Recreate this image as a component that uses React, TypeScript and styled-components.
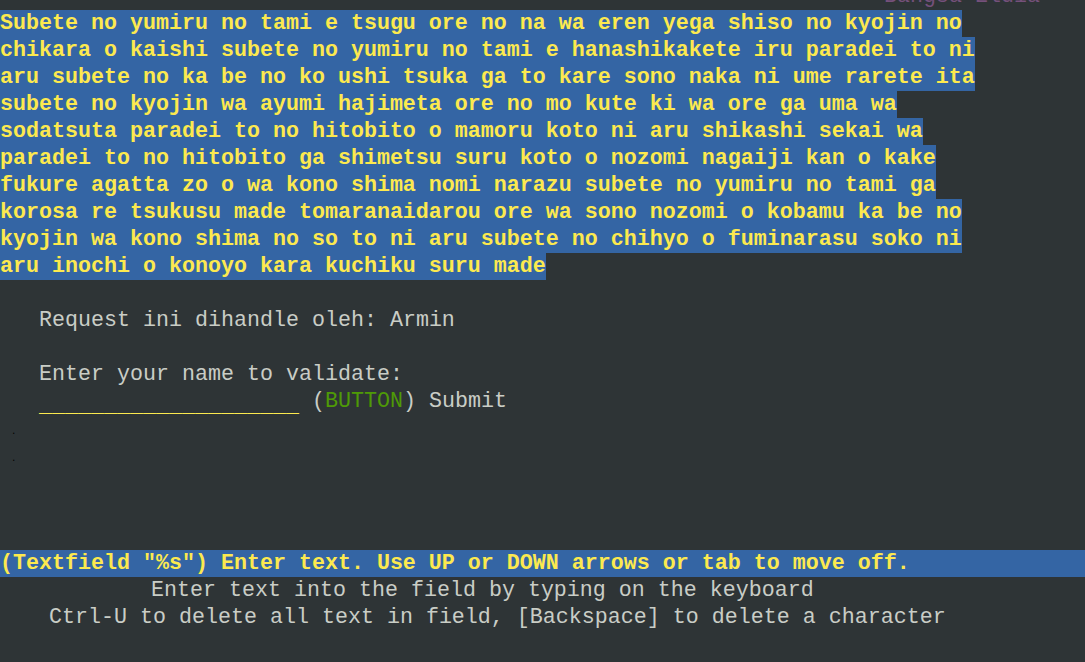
import React from "react";
import styled, { createGlobalStyle } from "styled-components";

const GlobalStyle = createGlobalStyle`
  html, body {
    margin: 0;
    padding: 0;
    background: #2e3436;
    overflow: hidden;
  }
  body {
    font-family: "Liberation Mono", "DejaVu Sans Mono", monospace;
  }
`;

const Screen = styled.div`
  width: 1085px;
  height: 662px;
  display: flex;
  flex-direction: column;
  background: #2e3436;
  color: #c9cdc6;
  font-family: "Liberation Mono", "DejaVu Sans Mono", monospace;
  font-size: 21.66px;
  line-height: 27px;
  white-space: pre;
  overflow: hidden;
`;

const TitleRow = styled.div`
  height: 10px;
  overflow: hidden;
  display: flex;
  align-items: flex-end;
  padding-left: 884px;
  color: #75507b;
  flex-shrink: 0;
`;

const TitleText = styled.span`
  display: block;
  height: 27px;
  flex-shrink: 0;
`;

const Line = styled.div<{ $indent?: number }>`
  height: 27px;
  padding-left: ${(p) => p.$indent ?? 0}px;
  flex-shrink: 0;
`;

const HighlightLine = styled.div`
  display: block;
  width: fit-content;
  height: 27px;
  background: #3465a4;
  color: #fce94f;
  font-weight: bold;
  flex-shrink: 0;
`;

const Field = styled.span`
  color: #fce94f;
  font-weight: bold;
  vertical-align: -5px;
`;

const ButtonTag = styled.span`
  color: #4e9a06;
`;

const Dot = styled.span`
  color: #000;
  font-size: 9px;
`;

const Footer = styled.div`
  margin-top: auto;
  padding-bottom: 31px;
  display: flex;
  flex-direction: column;
`;

const StatusBar = styled.div`
  height: 27px;
  background: #3465a4;
  color: #fce94f;
  font-weight: bold;
`;

const paragraph = [
  "Subete no yumiru no tami e tsugu ore no na wa eren yega shiso no kyojin no",
  "chikara o kaishi subete no yumiru no tami e hanashikakete iru paradei to ni",
  "aru subete no ka be no ko ushi tsuka ga to kare sono naka ni ume rarete ita",
  "subete no kyojin wa ayumi hajimeta ore no mo kute ki wa ore ga uma wa",
  "sodatsuta paradei to no hitobito o mamoru koto ni aru shikashi sekai wa",
  "paradei to no hitobito ga shimetsu suru koto o nozomi nagaiji kan o kake",
  "fukure agatta zo o wa kono shima nomi narazu subete no yumiru no tami ga",
  "korosa re tsukusu made tomaranaidarou ore wa sono nozomi o kobamu ka be no",
  "kyojin wa kono shima no so to ni aru subete no chihyo o fuminarasu soko ni",
  "aru inochi o konoyo kara kuchiku suru made",
];

export default function App() {
  return (
    <>
      <GlobalStyle />
      <Screen>
        <TitleRow>
          <TitleText>Bangsa Eldia</TitleText>
        </TitleRow>
        {paragraph.map((text, i) => (
          <HighlightLine key={i}>{text}</HighlightLine>
        ))}
        <Line />
        <Line $indent={39}>Request ini dihandle oleh: Armin</Line>
        <Line />
        <Line $indent={39}>Enter your name to validate:</Line>
        <Line $indent={39}>
          <Field>____________________</Field> (<ButtonTag>BUTTON</ButtonTag>) Submit
        </Line>
        <Line $indent={11}>
          <Dot>.</Dot>
        </Line>
        <Line $indent={11}>
          <Dot>.</Dot>
        </Line>
        <Footer>
          <StatusBar>
            (Textfield "%s") Enter text. Use UP or DOWN arrows or tab to move off.
          </StatusBar>
          <Line $indent={151}>Enter text into the field by typing on the keyboard</Line>
          <Line $indent={49}>
            Ctrl-U to delete all text in field, [Backspace] to delete a character
          </Line>
        </Footer>
      </Screen>
    </>
  );
}
